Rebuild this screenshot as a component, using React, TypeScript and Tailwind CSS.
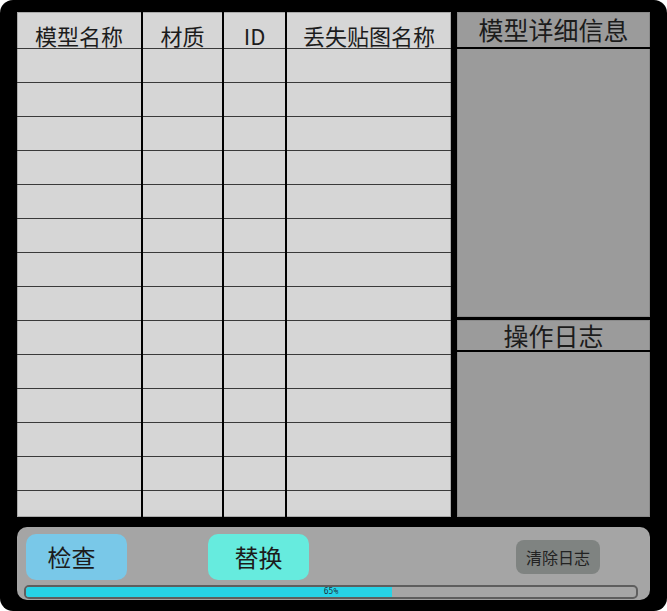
import React from 'react';

const COLUMNS = [
  { title: '模型名称', width: 'w-[126px]', line: true },
  { title: '材质', width: 'w-[81px]', line: true },
  { title: 'ID', width: 'w-[63px]', line: true },
  { title: '丢失贴图名称', width: 'flex-1', line: false },
];

const ROW_COUNT = 14;

export default function App() {
  const progress = 65;

  return (
    <div className="w-[667px] h-[611px] bg-white font-['Noto_Sans_CJK_SC','Noto_Sans',sans-serif] text-[#1c1c1c]">
      <div className="w-full h-full bg-black rounded-[13px] pt-[12px] pb-[11px] px-[17px] flex flex-col">
        {/* Top: table + side panels */}
        <div className="flex h-[505px] gap-[6px]">
          {/* Model table */}
          <div className="w-[434px] h-full bg-[#d6d6d6] flex overflow-hidden shadow-[inset_0_0_0_1px_#a9a9a9]">
            {COLUMNS.map(col => (
              <div
                key={col.title}
                className={`${col.width} h-full flex flex-col ${col.line ? 'border-r-2 border-black' : ''}`}
              >
                <div className="h-[37px] shrink-0 border-b border-[#3a3a3a] flex items-center justify-center pt-[9px] text-[22px] leading-none">
                  {col.title}
                </div>
                {Array.from({ length: ROW_COUNT }).map((_, i) => (
                  <div key={i} className="h-[34px] shrink-0 border-b border-[#3a3a3a]" />
                ))}
              </div>
            ))}
          </div>

          {/* Right column */}
          <div className="w-[193px] h-full flex flex-col gap-[3px]">
            <div className="h-[305px] bg-[#9b9b9b] flex flex-col shadow-[inset_0_0_0_1px_#8a8a8a]">
              <div className="h-[37px] border-b-2 border-black flex items-center justify-center text-[25px] leading-none">
                模型详细信息
              </div>
            </div>
            <div className="flex-1 bg-[#9b9b9b] flex flex-col shadow-[inset_0_0_0_1px_#8a8a8a]">
              <div className="h-[32px] border-b-2 border-black flex items-center justify-center text-[25px] leading-none">
                操作日志
              </div>
            </div>
          </div>
        </div>

        {/* Bottom controls */}
        <div className="mt-[10px] h-[73px] bg-[#a5a5a5] rounded-[10px] pt-[7px] pl-[9px] pr-[12px] flex flex-col">
          <div className="h-[46px] flex items-center">
            <button className="w-[101px] h-[46px] bg-[#79c8e8] rounded-[10px] text-[24px] leading-none pr-[10px]">
              检查
            </button>
            <button className="ml-[81px] w-[101px] h-[46px] bg-[#66ebde] rounded-[10px] text-[24px] leading-none">
              替换
            </button>
            <button className="ml-[207px] w-[84px] h-[34px] bg-[#7f8381] rounded-[8px] text-[16px] leading-none text-[#222]">
              清除日志
            </button>
          </div>
          <div className="mt-[5px] ml-[-2px] h-[14px] relative border-2 border-[#5e5e5e] rounded-[5px] bg-[#a6a6a6] overflow-hidden">
            <div className="h-full w-[60%] bg-[#27d2e6]" />
            <span className="absolute inset-0 flex items-center justify-center text-[8px] leading-none text-[#1d3440] font-['DejaVu_Sans_Mono',monospace]">
              {progress}%
            </span>
          </div>
        </div>
      </div>
    </div>
  );
}
